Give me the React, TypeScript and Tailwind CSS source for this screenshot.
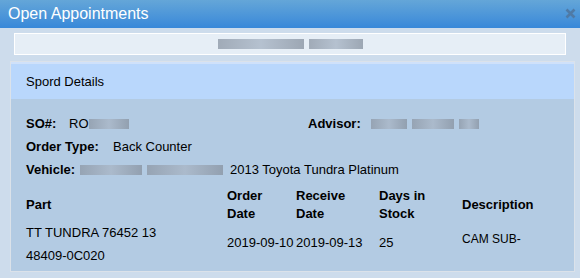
import React from "react";

function Blur({ widths }: { widths: number[] }) {
  // pixelated / redacted text
  return (
    <span className="inline-flex items-center gap-[5px] align-middle">
      {widths.map((w, i) => (
        <span
          key={i}
          className="inline-block h-[10px] bg-gradient-to-r from-[#8f9aa8] via-[#a9b6c6] to-[#8a95a3] opacity-80"
          style={{ width: w }}
        />
      ))}
    </span>
  );
}

export default function App() {
  return (
    <div className="w-[580px] h-[278px] overflow-hidden bg-[#cddcec] font-['Liberation_Sans',Arial,sans-serif] text-[13px] text-black">
      <div className="h-[28px] flex items-center justify-between pl-[8px] pr-[4px] pb-[1px] bg-gradient-to-b from-[#64a6d8] to-[#3888d9]">
        <span className="text-white text-[16px]">Open Appointments</span>
        <svg width="11" height="11" viewBox="0 0 11 11">
          <path d="M1.5 1.5 L9.5 9.5 M9.5 1.5 L1.5 9.5" stroke="#4f7aa6" strokeWidth="2.6" />
        </svg>
      </div>

      <div className="mx-[14px] mt-[5px] h-[22px] border border-white bg-[#e6eef6] flex items-center justify-center">
        <Blur widths={[86, 54]} />
      </div>

      <div className="ml-[10px] mr-[5px] mt-[6px] border border-[#dbe2ea] bg-[#b3cbe3]">
        <div className="h-[37px] flex items-center pl-[15px] border-t-2 border-[#cfe1fa] bg-[#b9d7fc]">
          Spord Details
        </div>

        <div className="pl-[15px] pt-[14px] pb-[4px]">
          <div className="flex h-[22px] items-center">
            <div className="w-[282px] flex items-center">
              <span className="font-bold w-[43px]">SO#:</span>
              <span>RO</span>
              <Blur widths={[40]} />
            </div>
            <span className="font-bold w-[63px]">Advisor:</span>
            <Blur widths={[36, 42, 20]} />
          </div>
          <div className="flex h-[23px] items-center">
            <span className="font-bold w-[87px]">Order Type:</span>
            <span>Back Counter</span>
          </div>
          <div className="flex h-[23px] items-center">
            <span className="font-bold w-[54px]">Vehicle:</span>
            <Blur widths={[62, 76]} />
            <span className="ml-[7px]">2013 Toyota Tundra Platinum</span>
          </div>

          <div className="grid grid-cols-[201px_69px_83px_83px_1fr] mt-[6px] font-bold leading-[18px]">
            <div className="flex items-center">Part</div>
            <div>Order<br />Date</div>
            <div>Receive<br />Date</div>
            <div>Days in<br />Stock</div>
            <div className="flex items-center">Description</div>
          </div>

          <div className="grid grid-cols-[201px_69px_83px_83px_1fr] -mt-[2px] items-center">
            <div className="leading-[23px]">
              <div>TT TUNDRA 76452 13</div>
              <div>48409-0C020</div>
            </div>
            <div className="pb-[2px]">2019-09-10</div>
            <div className="pb-[2px]">2019-09-13</div>
            <div className="pb-[2px]">25</div>
            <div className="text-[12px] pb-[10px]">CAM SUB-</div>
          </div>
        </div>
      </div>
    </div>
  );
}
